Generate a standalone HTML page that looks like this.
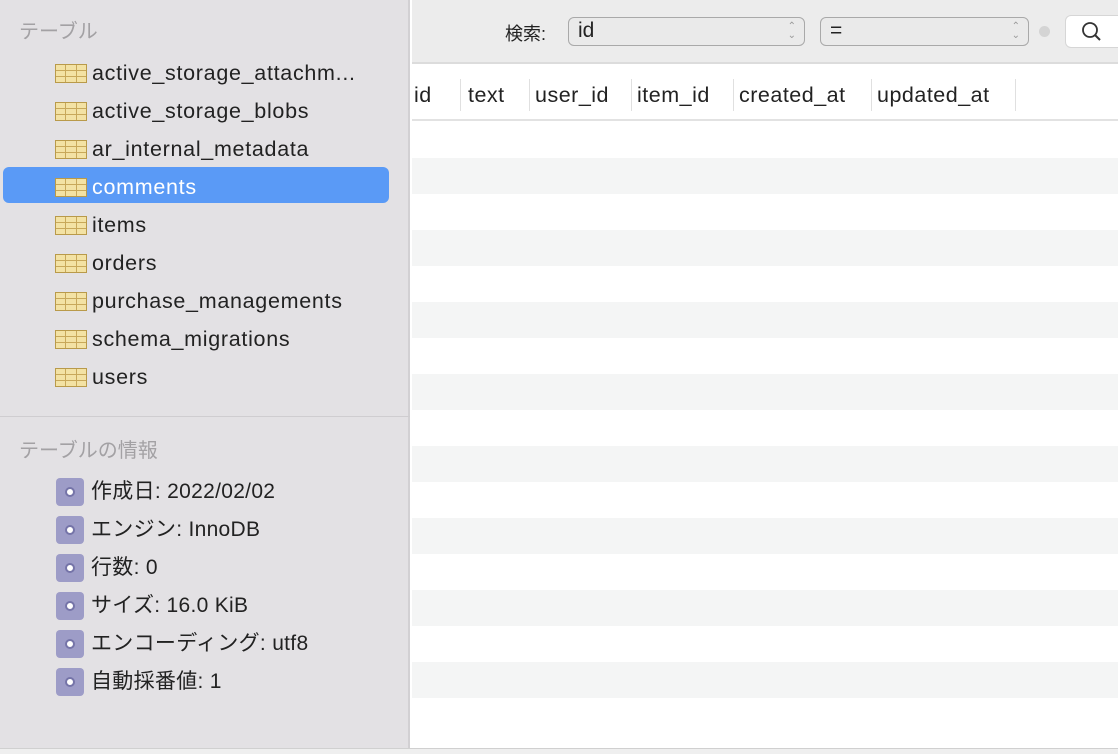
<!DOCTYPE html>
<html><head><meta charset="utf-8"><style>
*{margin:0;padding:0;box-sizing:border-box}
html,body{width:1118px;height:754px;overflow:hidden}
body{position:relative;background:#fff;font-family:"Liberation Sans","Noto Sans CJK JP",sans-serif;color:#222}
#side{position:absolute;left:0;top:0;width:410px;height:754px;background:#e3e1e4;border-right:2px solid #d2d0d3}
.hd{position:absolute;left:19px;font-size:20px;color:#a3a1a4}
.it{position:absolute;left:55px;height:36px;font-size:21.5px;letter-spacing:0.7px;line-height:36px;padding-left:37px;white-space:nowrap}
.tb{position:absolute;left:0;top:9px;width:32px;height:19px;border:1px solid #b99a4a;background:
linear-gradient(#c8a85a,#c8a85a) 0 5px/100% 1px no-repeat,
linear-gradient(#c8a85a,#c8a85a) 0 11px/100% 1px no-repeat,
linear-gradient(90deg,transparent 9px,#c8a85a 9px,#c8a85a 10px,transparent 10px,transparent 20px,#c8a85a 20px,#c8a85a 21px,transparent 21px),#f3e2a4}
#sel{position:absolute;left:3px;top:167px;width:386px;height:36px;background:#5a9af6;border-radius:6px}
.inf{position:absolute;left:56px;height:30px;font-size:21px;letter-spacing:0.3px;line-height:30px;padding-left:35px;white-space:nowrap}
.ic{position:absolute;left:0;top:1px;width:28px;height:28px;border-radius:4px;background:#9d9cc7}
.ic::after{content:"";position:absolute;left:9px;top:9px;width:10px;height:10px;border-radius:50%;background:#fff;border:2px solid #7574a8;box-sizing:border-box}
#tool{position:absolute;left:412px;top:0;width:706px;height:64px;background:#ececec;border-bottom:2px solid #dcdcdc}
.sel2{position:absolute;top:17px;height:29px;border:1.5px solid #a9a9a9;border-radius:6px;background:#eaeaea;font-size:21px;line-height:26px;padding-left:9px}
.ar{position:absolute;right:8px;top:4px;font-size:10px;color:#999;line-height:9px;text-align:center}
#hdr{position:absolute;left:412px;top:66px;width:706px;height:55px;border-bottom:2px solid #e2e2e2}
.col{position:absolute;top:13px;height:32px;font-size:21.5px;letter-spacing:0.5px;line-height:32px;padding-left:5px;border-right:1.5px solid #e0e0e0;white-space:nowrap}
.row{position:absolute;left:412px;width:706px;height:36px;background:#f4f5f5}
</style></head><body>
<div id="side">
<div class="hd" style="top:15px">テーブル</div>
<div id="sel"></div>
<div class="it" style="top:55px"><span class="tb"></span>active_storage_attachm...</div>
<div class="it" style="top:93px"><span class="tb"></span>active_storage_blobs</div>
<div class="it" style="top:131px"><span class="tb"></span>ar_internal_metadata</div>
<div class="it" style="top:169px;color:#fff"><span class="tb"></span>comments</div>
<div class="it" style="top:207px"><span class="tb"></span>items</div>
<div class="it" style="top:245px"><span class="tb"></span>orders</div>
<div class="it" style="top:283px"><span class="tb"></span>purchase_managements</div>
<div class="it" style="top:321px"><span class="tb"></span>schema_migrations</div>
<div class="it" style="top:359px"><span class="tb"></span>users</div>
<div style="position:absolute;left:0;top:416px;width:410px;height:1px;background:#cfcdd0"></div>
<div class="hd" style="top:434px">テーブルの情報</div>
<div class="inf" style="top:477px"><span class="ic"></span>作成日: 2022/02/02</div>
<div class="inf" style="top:515px"><span class="ic"></span>エンジン: InnoDB</div>
<div class="inf" style="top:553px"><span class="ic"></span>行数: 0</div>
<div class="inf" style="top:591px"><span class="ic"></span>サイズ: 16.0 KiB</div>
<div class="inf" style="top:629px"><span class="ic"></span>エンコーディング: utf8</div>
<div class="inf" style="top:667px"><span class="ic"></span>自動採番値: 1</div>
</div>
<div id="tool">
<div style="position:absolute;left:93px;top:20px;font-size:18px">検索:</div>
<div class="sel2" style="left:156px;width:237px">id<div class="ar">⌃<br>⌄</div></div>
<div class="sel2" style="left:408px;width:209px">=<div class="ar">⌃<br>⌄</div></div>
<div style="position:absolute;left:627px;top:26px;width:11px;height:11px;border-radius:50%;background:#d4d4d4"></div>
<div style="position:absolute;left:653px;top:15px;width:60px;height:33px;background:#fff;border:1px solid #d6d6d6;border-radius:6px">
<svg width="24" height="24" style="position:absolute;left:14px;top:4px" viewBox="0 0 24 24"><circle cx="10" cy="10" r="7" fill="none" stroke="#333" stroke-width="1.8"/><path d="M15 15l5 5" stroke="#333" stroke-width="2"/></svg></div>
</div>
<div id="hdr">
<div class="col" style="left:-3px;width:52px">id</div>
<div class="col" style="left:51px;width:67px">text</div>
<div class="col" style="left:118px;width:102px">user_id</div>
<div class="col" style="left:220px;width:102px">item_id</div>
<div class="col" style="left:322px;width:138px">created_at</div>
<div class="col" style="left:460px;width:144px">updated_at</div>
</div>
<div class="row" style="top:158px"></div>
<div class="row" style="top:230px"></div>
<div class="row" style="top:302px"></div>
<div class="row" style="top:374px"></div>
<div class="row" style="top:446px"></div>
<div class="row" style="top:518px"></div>
<div class="row" style="top:590px"></div>
<div class="row" style="top:662px"></div>
<div style="position:absolute;left:0;top:748px;width:1118px;height:6px;background:#efefef;border-top:1px solid #d0d0d0"></div>
</body></html>
